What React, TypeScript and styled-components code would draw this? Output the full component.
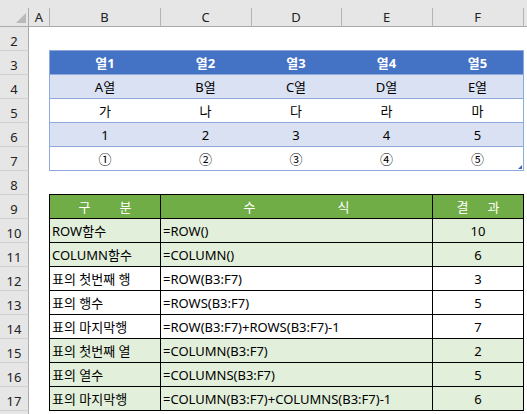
import React from "react";
import styled, { createGlobalStyle } from "styled-components";

const FONT = `"Noto Sans", "Noto Sans CJK KR", sans-serif`;

const GlobalStyle = createGlobalStyle`
  html, body { margin: 0; padding: 0; background: #ffffff; overflow: hidden; }
  body { font-family: ${FONT}; }
  * { box-sizing: border-box; }
`;

const Sheet = styled.div`
  display: grid;
  grid-template-columns: 29px 20px 111px 91px 90px 91px 91px 1fr;
  grid-template-rows: 27px repeat(17, 24px);
  width: 527px;
  height: 414px;
  overflow: hidden;
  font-family: ${FONT};
  font-size: 13px;
  color: #000;
  background: #fff;
`;

const Corner = styled.div`
  grid-row: 1;
  grid-column: 1;
  background: linear-gradient(#ababab, #ababab) right 8px / 1px calc(100% - 8px) no-repeat, #e6e6e6;
  border-bottom: 1px solid #ababab;
  display: flex;
  align-items: flex-end;
  justify-content: flex-end;
  padding: 0 3px 3px 0;
`;

const ColHead = styled.div<{ $col: number; $sep: boolean }>`
  grid-row: 1;
  grid-column: ${(p) => p.$col};
  background: ${(p) =>
    p.$sep
      ? "linear-gradient(#b4b4b4, #b4b4b4) left 8px / 1px calc(100% - 8px) no-repeat, #e6e6e6"
      : "#e6e6e6"};
  border-bottom: 1px solid #ababab;
  display: flex;
  align-items: center;
  justify-content: center;
  padding-top: 7px;
  color: #222;
  font-size: 13px;
`;

const RowHead = styled.div<{ $row: number }>`
  grid-column: 1;
  grid-row: ${(p) => p.$row};
  background: #e6e6e6;
  border-bottom: 1px solid #d0d0d0;
  border-right: 1px solid #ababab;
  display: flex;
  align-items: center;
  justify-content: center;
  padding-top: 5px;
  color: #222;
  font-size: 13px;
`;

const BlueTable = styled.div`
  grid-column: 3 / 8;
  grid-row: 3 / 8;
  align-self: start;
  height: 121px;
  margin: -1px -1px 0 0;
  display: flex;
  flex-direction: column;
  border: 1px solid #8ea9db;
  border-top: none;
  position: relative;
`;

type BlueVariant = "head" | "band" | "plain";

const BlueRow = styled.div<{ $variant: BlueVariant }>`
  height: 24px;
  flex: none;
  display: grid;
  grid-template-columns: 110px 91px 90px 91px 1fr;
  border-top: 1px solid #8ea9db;
  background: ${(p) =>
    p.$variant === "head" ? "#4472c4" : p.$variant === "band" ? "#d9e1f2" : "#ffffff"};
  color: ${(p) => (p.$variant === "head" ? "#ffffff" : "#000000")};
  font-weight: ${(p) => (p.$variant === "head" ? 700 : 400)};
`;

const BlueCell = styled.div`
  display: flex;
  align-items: center;
  justify-content: center;
  white-space: nowrap;
`;

const ResizeHandle = styled.svg`
  position: absolute;
  right: 1px;
  bottom: 1px;
`;

const GreenTable = styled.div`
  grid-column: 3 / 8;
  grid-row: 9 / 18;
  align-self: start;
  height: 217px;
  margin: -1px -1px 0 0;
  display: flex;
  flex-direction: column;
  border: 1px solid #000;
  border-top: none;
`;

type GreenVariant = "head" | "light" | "plain";

const GreenRow = styled.div<{ $variant: GreenVariant }>`
  height: 24px;
  flex: none;
  display: grid;
  grid-template-columns: 110px 272px 1fr;
  border-top: 1px solid #000;
  background: ${(p) =>
    p.$variant === "head" ? "#70ad47" : p.$variant === "light" ? "#e2efda" : "#ffffff"};
  color: ${(p) => (p.$variant === "head" ? "#ffffff" : "#000000")};
`;

const GreenCell = styled.div<{ $align: "left" | "center"; $divider?: boolean }>`
  display: flex;
  align-items: center;
  justify-content: ${(p) => (p.$align === "center" ? "center" : "flex-start")};
  padding-left: ${(p) => (p.$align === "left" ? "2px" : "0")};
  border-left: ${(p) => (p.$divider ? "1px solid #000" : "none")};
  white-space: pre;
  overflow: hidden;
`;

const Spaced = styled.span<{ $gap: number }>`
  display: inline-flex;
  gap: ${(p) => p.$gap}px;
`;

const letters = ["A", "B", "C", "D", "E", "F", ""];

const blueRows: { variant: BlueVariant; cells: string[] }[] = [
  { variant: "head", cells: ["열1", "열2", "열3", "열4", "열5"] },
  { variant: "band", cells: ["A열", "B열", "C열", "D열", "E열"] },
  { variant: "plain", cells: ["가", "나", "다", "라", "마"] },
  { variant: "band", cells: ["1", "2", "3", "4", "5"] },
  { variant: "plain", cells: ["①", "②", "③", "④", "⑤"] },
];

const greenRows: { variant: GreenVariant; label: string; formula: string; result: string }[] = [
  { variant: "light", label: "ROW함수", formula: "=ROW()", result: "10" },
  { variant: "light", label: "COLUMN함수", formula: "=COLUMN()", result: "6" },
  { variant: "plain", label: "표의 첫번째 행", formula: "=ROW(B3:F7)", result: "3" },
  { variant: "plain", label: "표의 행수", formula: "=ROWS(B3:F7)", result: "5" },
  { variant: "plain", label: "표의 마지막행", formula: "=ROW(B3:F7)+ROWS(B3:F7)-1", result: "7" },
  { variant: "light", label: "표의 첫번째 열", formula: "=COLUMN(B3:F7)", result: "2" },
  { variant: "light", label: "표의 열수", formula: "=COLUMNS(B3:F7)", result: "5" },
  { variant: "light", label: "표의 마지막행", formula: "=COLUMN(B3:F7)+COLUMNS(B3:F7)-1", result: "6" },
];

export default function App() {
  const rowNums = Array.from({ length: 17 }, (_, i) => i + 2);
  return (
    <>
      <GlobalStyle />
      <Sheet>
        <Corner>
          <svg width="10" height="10" viewBox="0 0 10 10">
            <polygon points="10,0 10,10 0,10" fill="#b9b9b9" />
          </svg>
        </Corner>
        {letters.map((l, i) => (
          <ColHead key={i} $col={i + 2} $sep={i > 0}>
            {l}
          </ColHead>
        ))}
        {rowNums.map((r) => (
          <RowHead key={r} $row={r}>
            {r < 18 ? r : ""}
          </RowHead>
        ))}
        <BlueTable>
          {blueRows.map((row, ri) => (
            <BlueRow key={ri} $variant={row.variant}>
              {row.cells.map((c, ci) => (
                <BlueCell key={ci}>{c}</BlueCell>
              ))}
            </BlueRow>
          ))}
          <ResizeHandle width="4" height="4" viewBox="0 0 4 4">
            <polygon points="4,0 4,4 0,4" fill="#3f64b0" />
          </ResizeHandle>
        </BlueTable>
        <GreenTable>
          <GreenRow $variant="head">
            <GreenCell $align="center">
              <Spaced $gap={29}>
                <span>구</span>
                <span>분</span>
              </Spaced>
            </GreenCell>
            <GreenCell $align="center" $divider>
              <Spaced $gap={82}>
                <span>수</span>
                <span>식</span>
              </Spaced>
            </GreenCell>
            <GreenCell $align="center" $divider>
              <Spaced $gap={19}>
                <span>결</span>
                <span>과</span>
              </Spaced>
            </GreenCell>
          </GreenRow>
          {greenRows.map((row, i) => (
            <GreenRow key={i} $variant={row.variant}>
              <GreenCell $align="left">{row.label}</GreenCell>
              <GreenCell $align="left" $divider>
                {row.formula}
              </GreenCell>
              <GreenCell $align="center" $divider>
                {row.result}
              </GreenCell>
            </GreenRow>
          ))}
        </GreenTable>
      </Sheet>
    </>
  );
}
